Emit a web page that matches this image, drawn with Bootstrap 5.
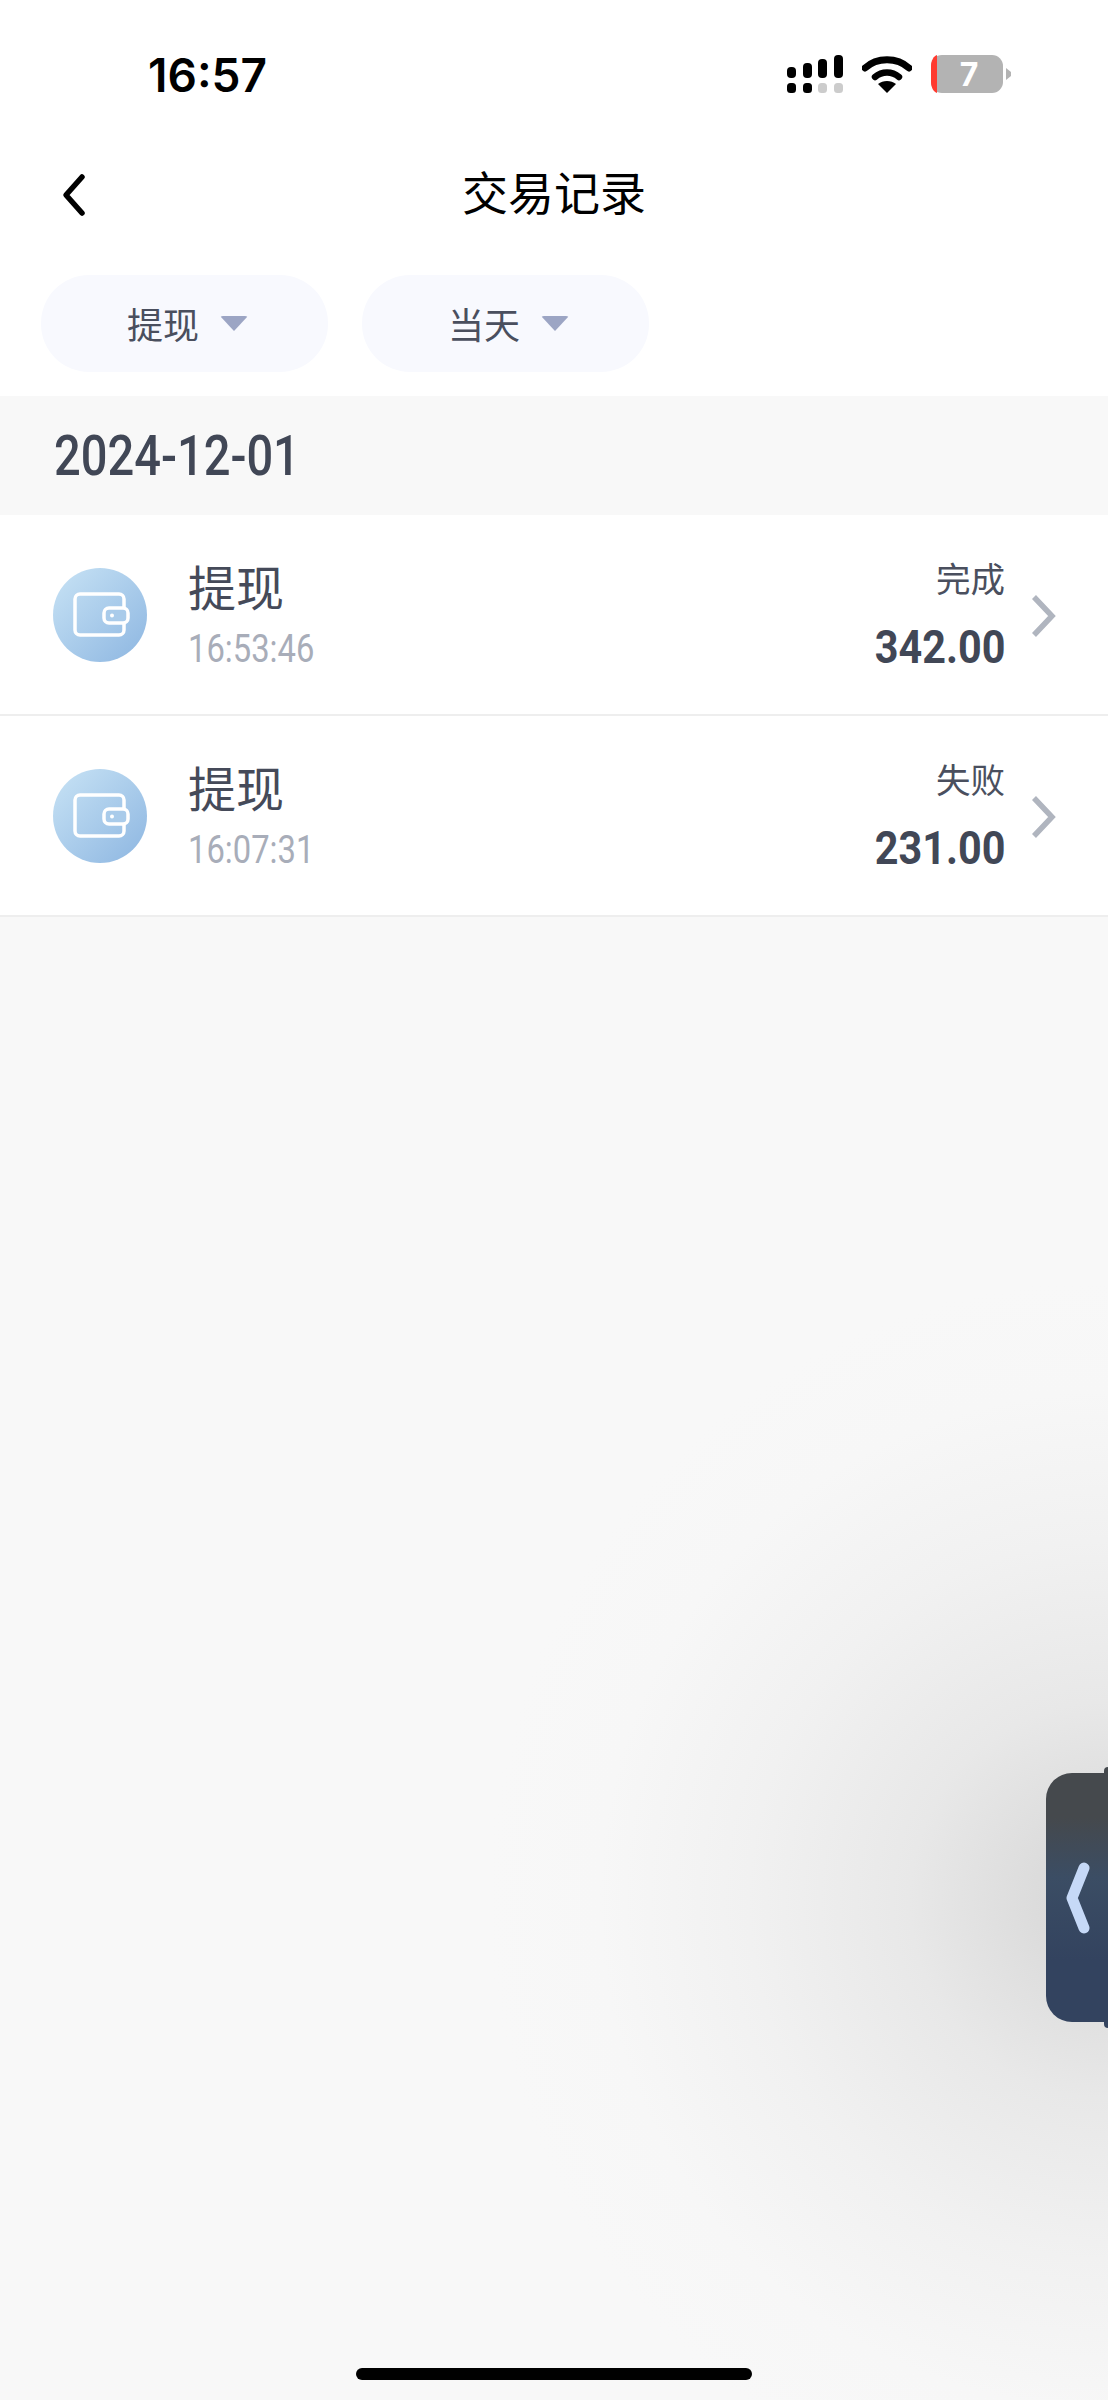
<!DOCTYPE html>
<html lang="zh-CN">
<head>
  <meta charset="UTF-8" />
  <meta name="viewport" content="width=device-width, initial-scale=1.0" />
  <title>交易记录</title>
  <link href="https://cdn.jsdelivr.net/npm/bootstrap@5.3.3/dist/css/bootstrap.min.css" rel="stylesheet" />
  <style>
    html, body { height: 2400px; }
    body { width: 1108px; font-family: "Noto Sans CJK SC", "Liberation Sans", sans-serif; color: #414756; background: #fff; overflow: hidden; position: relative; }
    /* the picture uses a condensed number font, squeeze Roboto to get near it */
    .din { display: inline-block; font-family: "Roboto", "Liberation Sans", sans-serif; transform-origin: left center; }

    /* status bar */
    .status-bar { height: 150px; padding: 49px 97px 0 148px; }
    .status-time { font-family: "Inter", "Liberation Sans", sans-serif; font-weight: 600; font-size: 46px; line-height: 50px; color: #000; margin-top: 1px; }
    .status-icons { gap: 19px; }

    /* title bar */
    .title-bar { height: 96px; margin-top: -6px; padding-left: 60px; position: relative; }
    .title-text { font-size: 46px; line-height: 60px; color: #000; position: absolute; left: 0; right: 0; top: 16px; text-align: center; }
    .back-icon { margin-top: 5px; }

    /* filter pills */
    .filter-row { padding: 35px 0 0 41px; gap: 34px; height: 156px; }
    .filter-pill { width: 287px; height: 97px; border-radius: 48px; background: #f8f9fe; gap: 21px; font-size: 36px; line-height: 44px; color: #4a4f5e; padding: 0 0 2px 6px; }
    .filter-arrow { width: 0; height: 0; border-left: 14px solid transparent; border-right: 14px solid transparent; border-top: 15px solid #9ca5c4; border-radius: 3px; margin-top: 1px; }

    /* list */
    .date-bar { height: 119px; padding-left: 54px; background: #f8f8f8; font-size: 56px; font-weight: 500; color: #414756; }
    .date-text { transform: scaleX(.84); }
    .tx-row { height: 201px; background: #fff; border-bottom: 2px solid #eeeeee; padding-left: 53px; padding-right: 53px; }
    .tx-icon { width: 94px; height: 94px; border-radius: 50%; background: linear-gradient(135deg, #c8e3f5, #8db6e1); margin-right: 41px; }
    .tx-name { font-size: 48px; line-height: 60px; color: #454a59; margin-top: -3px; }
    .tx-time { font-size: 39px; line-height: 44px; color: #a8adb9; margin-top: 8px; }
    .tx-time .din { transform: scaleX(.84); }
    .tx-status { font-size: 34.5px; line-height: 44px; color: #4a4f5e; }
    .tx-amount { font-size: 47px; line-height: 56px; font-weight: 700; color: #414756; margin-top: 16px; }
    .tx-amount .din { transform: scaleX(.88); transform-origin: right center; }
    .tx-arrow { margin-left: 26px; margin-right: -1px; margin-top: 2px; }

    /* empty part with the shadow of the side handle */
    .list-rest { background: radial-gradient(circle 620px at 1108px 983px, #d6d6d6 0%, #dcdcdc 12%, #e8e8e8 32%, #f1f1f1 58%, #f7f7f7 82%, #f8f8f8 100%), #f8f8f8; }

    .side-handle { position: absolute; right: 0; top: 1773px; width: 62px; height: 249px; border-radius: 26px 0 0 26px; background: linear-gradient(180deg, #45494d 0%, #45494d 18%, #3b4d64 42%, #33435f 75%, #33435f 100%); padding-left: 14px; }
    .side-handle::before, .side-handle::after { content: ""; position: absolute; right: 0; width: 4px; height: 7px; }
    .side-handle::before { top: -6px; background: #45494d; border-radius: 4px 0 0 0; }
    .side-handle::after { bottom: -6px; background: #33435f; border-radius: 0 0 0 4px; }
    .home-bar { position: absolute; left: 356px; top: 2368px; width: 396px; height: 12px; border-radius: 6px; background: #000; }
  </style>
</head>
<body class="d-flex flex-column">
  <!-- status bar -->
  <div class="status-bar d-flex justify-content-between align-items-start flex-shrink-0">
    <div class="status-time">16:57</div>
    <div class="status-icons d-flex align-items-center">
      <svg width="56" height="38" viewBox="0 0 56 38">
        <rect x="0" y="12" width="9" height="11" rx="4" fill="#000" />
        <rect x="16" y="8" width="9" height="15" rx="4" fill="#000" />
        <rect x="31" y="4" width="9" height="19" rx="4" fill="#000" />
        <rect x="47" y="0" width="9" height="23" rx="4" fill="#000" />
        <rect x="0" y="28" width="9" height="10" rx="3.5" fill="#000" />
        <rect x="16" y="28" width="9" height="10" rx="3.5" fill="#000" />
        <rect x="31" y="28" width="9" height="10" rx="3.5" fill="#cccccc" />
        <rect x="47" y="28" width="9" height="10" rx="3.5" fill="#cccccc" />
      </svg>
      <svg width="50" height="38" viewBox="0 0 50 38">
        <path d="M3 13 C15 2 35 2 47 13" fill="none" stroke="#000" stroke-width="7" stroke-linecap="round" />
        <path d="M13 22 C20 16 30 16 37 22" fill="none" stroke="#000" stroke-width="6.5" stroke-linecap="round" />
        <path d="M16 29 C21 25 29 25 34 29 L25 38 Z" fill="#000" />
      </svg>
      <svg width="80" height="50" viewBox="0 -6 80 50">
        <rect x="0" y="0" width="72" height="38" rx="11" fill="#b3b3b3" />
        <path d="M0 11 C0 5 3 1 6 0 V38 C3 37 0 33 0 27 Z" fill="#ff3b30" />
        <path d="M75 13 L80 17 V21 L75 25 Z" fill="#b3b3b3" />
        <text x="38" y="31" text-anchor="middle" font-family="Inter, 'Liberation Sans', sans-serif" font-size="32" font-weight="700" fill="#fff">7</text>
      </svg>
    </div>
  </div>

  <!-- title bar -->
  <div class="title-bar d-flex align-items-center flex-shrink-0">
    <div class="title-text">交易记录</div>
    <svg class="back-icon" width="28" height="44" viewBox="0 0 28 44">
      <path d="M22 4 L6 22 L22 40" fill="none" stroke="#000" stroke-width="5.5" stroke-linecap="round" stroke-linejoin="round" />
    </svg>
  </div>

  <!-- filters -->
  <div class="filter-row d-flex flex-shrink-0">
    <div class="filter-pill d-flex align-items-center justify-content-center">提现<span class="filter-arrow"></span></div>
    <div class="filter-pill d-flex align-items-center justify-content-center">当天<span class="filter-arrow"></span></div>
  </div>

  <!-- list -->
  <div class="date-bar d-flex align-items-center flex-shrink-0"><span class="din date-text">2024-12-01</span></div>

  <div class="tx-row d-flex align-items-center flex-shrink-0">
    <div class="tx-icon d-flex align-items-center justify-content-center flex-shrink-0">
      <svg width="94" height="94" viewBox="0 0 94 94">
        <rect x="22" y="26" width="49" height="41" rx="5" fill="none" stroke="#fff" stroke-width="3.5" />
        <rect x="51" y="40" width="24" height="15" rx="5" fill="#a9cbea" stroke="#fff" stroke-width="3.5" />
        <circle cx="59" cy="47.5" r="2" fill="#fff" />
      </svg>
    </div>
    <div class="flex-grow-1">
      <div class="tx-name">提现</div>
      <div class="tx-time"><span class="din">16:53:46</span></div>
    </div>
    <div class="text-end">
      <div class="tx-status">完成</div>
      <div class="tx-amount"><span class="din">342.00</span></div>
    </div>
    <svg class="tx-arrow" width="25" height="44" viewBox="0 0 25 44">
      <path d="M3 3 L21 22 L3 41" fill="none" stroke="#b0b5bf" stroke-width="5.5" />
    </svg>
  </div>

  <div class="tx-row d-flex align-items-center flex-shrink-0">
    <div class="tx-icon d-flex align-items-center justify-content-center flex-shrink-0">
      <svg width="94" height="94" viewBox="0 0 94 94">
        <rect x="22" y="26" width="49" height="41" rx="5" fill="none" stroke="#fff" stroke-width="3.5" />
        <rect x="51" y="40" width="24" height="15" rx="5" fill="#a9cbea" stroke="#fff" stroke-width="3.5" />
        <circle cx="59" cy="47.5" r="2" fill="#fff" />
      </svg>
    </div>
    <div class="flex-grow-1">
      <div class="tx-name">提现</div>
      <div class="tx-time"><span class="din">16:07:31</span></div>
    </div>
    <div class="text-end">
      <div class="tx-status">失败</div>
      <div class="tx-amount"><span class="din">231.00</span></div>
    </div>
    <svg class="tx-arrow" width="25" height="44" viewBox="0 0 25 44">
      <path d="M3 3 L21 22 L3 41" fill="none" stroke="#b0b5bf" stroke-width="5.5" />
    </svg>
  </div>

  <div class="list-rest flex-grow-1"></div>

  <!-- floating side handle -->
  <div class="side-handle d-flex align-items-center">
    <svg width="30" height="76" viewBox="0 0 30 76">
      <path d="M24 8 L12 38 L24 68" fill="none" stroke="#c6d9f7" stroke-width="11" stroke-linecap="round" stroke-linejoin="round" />
    </svg>
  </div>
  <div class="home-bar"></div>

  <script src="https://cdn.jsdelivr.net/npm/bootstrap@5.3.3/dist/js/bootstrap.bundle.min.js"></script>
</body>
</html>
